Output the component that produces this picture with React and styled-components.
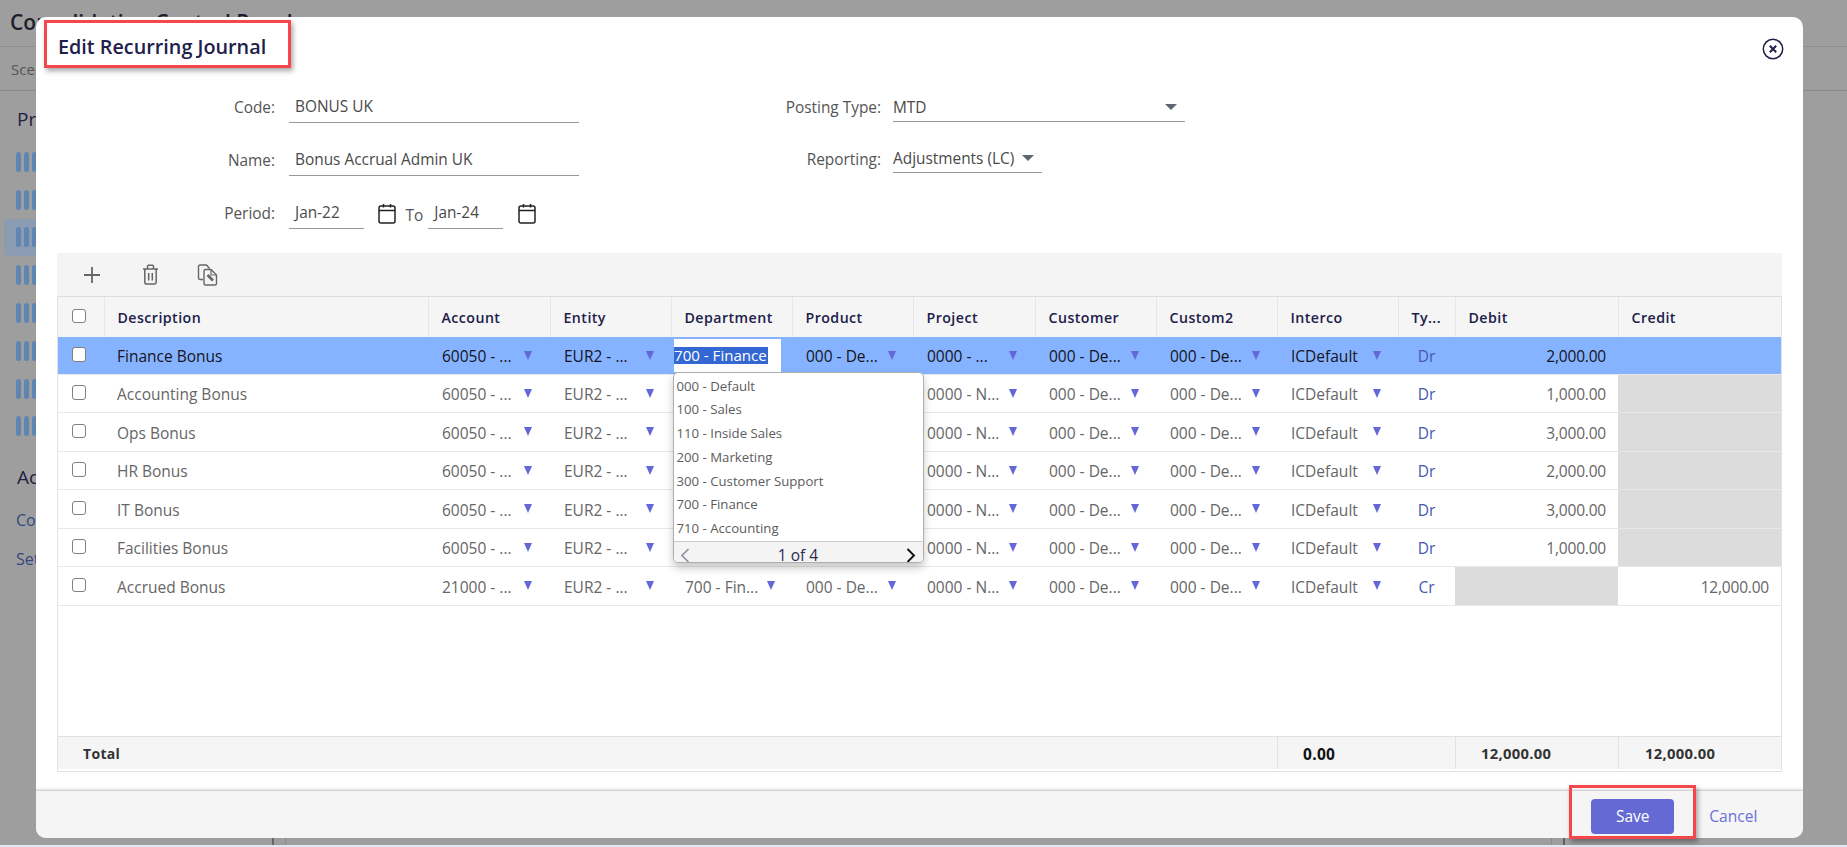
import React from "react";
import styled, { createGlobalStyle } from "styled-components";

const Global = createGlobalStyle`
  html, body { margin: 0; padding: 0; background: #9e9e9e; }
  * { box-sizing: border-box; }
  body { font-family: "Open Sans", "Noto Sans", "Liberation Sans", sans-serif; overflow: hidden; }
`;

const COLS = "46px 324px 122px 121px 121px 121px 122px 121px 121px 121px 57px 163px 163px";

/* ---------- dimmed page behind the dialog ---------- */
const Page = styled.div`
  position: relative; width: 1847px; height: 847px; overflow: hidden;
  display: flex; flex-direction: column; background: #9e9e9e;
`;
const PageHeader = styled.header`
  height: 47px; flex: none; padding: 7px 0 0 10px; border-bottom: 1px solid #8e8e8e;
  font-size: 21px; font-weight: 600; color: #1d1d2b; line-height: 30px;
`;
const ScenarioBar = styled.div`
  height: 44px; flex: none; padding-left: 11px; border-bottom: 1px solid #8a8a8a;
  font-size: 15px; color: #555; line-height: 45px;
`;
const PageBody = styled.div`flex: 1; display: flex; min-height: 0;`;
const Sidebar = styled.aside`
  width: 274px; flex: none; padding: 16px 0 0 4px; border-right: 2px solid #666;
`;
const SideTitle = styled.div`
  font-size: 19px; font-weight: 500; color: #1d2240; padding-left: 13px; line-height: 24px;
  height: ${(p) => p.$h}px; margin-top: ${(p) => p.$top || 0}px;
`;
const SideLink = styled.div`font-size: 16px; color: #2f4a80; padding-left: 12px; height: 39px; line-height: 24px;`;
const ProcessRow = styled.div`
  height: 37.8px; width: 200px; padding-left: 12px; display: flex; align-items: center; gap: 3px; border-radius: 5px;
  background: ${(p) => (p.$active ? "#8b9bb1" : "transparent")};
`;
const Pill = styled.span`width: 5px; height: 20px; border-radius: 3px; background: #5f86b3;`;
const Gutter = styled.div`width: 12px; flex: none; border-right: 1px solid #8a8a8a;`;
const MainPane = styled.main`width: 1266px; flex: none; border-right: 1px solid #8a8a8a;`;
const Rail = styled.div`width: 13px; flex: none; border-right: 2px solid #5f5f5f;`;
const Taskbar = styled.div`height: 2px; flex: none; background: #dfe8f2;`;

/* ---------- dialog ---------- */
const Modal = styled.section`
  position: absolute; left: 36px; top: 17px; width: 1766.5px; height: 821px;
  display: flex; flex-direction: column; background: #fff; border-radius: 10px; overflow: hidden;
`;
const TitleRow = styled.div`
  height: 53px; flex: none; display: flex; align-items: center; justify-content: space-between;
  padding: 5px 19px 0 22px;
`;
const Title = styled.h2`margin: 0; font-size: 19.8px; font-weight: 600; color: #20204a;`;
const CloseBtn = styled.button`
  border: 0; background: none; padding: 0; margin-top: 5px; display: flex; width: 22px; height: 22px; color: #20204a;
`;
const Form = styled.div`height: 183px; flex: none; display: flex;`;
const FormCol = styled.div`width: ${(p) => p.$w}px; flex: none; padding-left: ${(p) => p.$pad || 0}px;`;
const FieldRow = styled.div`
  height: ${(p) => p.$h || 53}px; display: flex; align-items: flex-end;
`;
const Label = styled.label`
  width: ${(p) => p.$w}px; flex: none; margin-right: ${(p) => p.$gap}px; text-align: right;
  margin-bottom: ${(p) => p.$drop || 0}px;
  font-size: 15.4px; line-height: 30px; color: #555;
`;
const TextValue = styled.div`
  width: ${(p) => p.$w}px; height: ${(p) => p.$h || 31}px; flex: none; border-bottom: 1px solid #999;
  padding-left: ${(p) => p.$pad ?? 6}px;
  display: flex; align-items: center; justify-content: space-between;
  font-size: 15.4px; color: #4a4a4a; line-height: 26px;
`;
const DropCaret = styled.span`
  width: 0; height: 0; margin-right: 8px; border-left: 6px solid transparent; border-right: 6px solid transparent;
  border-top: 6px solid #5f6670; margin-top: -2px;
`;
const DateIcon = styled.svg`
  width: 18px; height: 21px; flex: none; margin: 0 ${(p) => p.$r}px 5px ${(p) => p.$l}px; color: #222;
`;
const ToLabel = styled.span`font-size: 15.4px; color: #555; line-height: 26px; margin-right: 5px;`;

/* ---------- grid ---------- */
const Table = styled.div`
  height: 519px; flex: none; margin: 0 20.5px 0 21px; display: flex; flex-direction: column;
  border-right: 1px solid #e4e4e4; border-bottom: 1px solid #e0e0e0; border-left: 1px solid #e4e4e4;
`;
const Toolbar = styled.div`
  height: 43px; flex: none; margin: 0 -1px; background: #f4f4f4; display: flex; align-items: center;
  padding-left: 25px; color: #666;
`;
const ToolBtn = styled.button`
  border: 0; background: none; padding: 0; display: flex; color: #666; margin-right: ${(p) => p.$mr}px;
`;
const HeadRow = styled.div`
  height: 41px; flex: none; display: grid; grid-template-columns: ${COLS};
  background: #f5f5f5; border-top: 1px solid #ddd;
`;
const HeadCell = styled.div`
  display: flex; align-items: center; padding-left: 12.5px; font-size: 14.2px; font-weight: 600;
  letter-spacing: .45px; color: #20204a; border-left: 1px solid #e6e6e6;
`;
const Rows = styled.div`flex: 1; min-height: 0;`;
const Row = styled.div`
  height: ${(p) => (p.$selected ? 37.5 : 38.5)}px; display: grid; grid-template-columns: ${COLS};
  background: ${(p) => (p.$selected ? "#86b3ff" : "#fff")};
  color: ${(p) => (p.$selected ? "#14141c" : "#666")};
  font-weight: ${(p) => (p.$selected ? 500 : 400)};
  border-bottom: 1px solid #e8e8e8;
  font-size: 15.5px;
`;
const Cell = styled.div`
  position: relative; display: flex; align-items: center; padding: 1.5px ${(p) => (p.$right ? "12px" : "0")} 0 ${(p) => p.$left ?? 14}px;
  justify-content: ${(p) => (p.$right ? "flex-end" : "flex-start")};
  background: ${(p) => (p.$off ? "#dcdcdc" : "transparent")};
  letter-spacing: ${(p) => (p.$right ? "-.2px" : "0")};
  white-space: nowrap;
`;
const CheckCell = styled(Cell)`padding: 0 0 2px 13.5px;`;
const Check = styled.input.attrs({ type: "checkbox", readOnly: true, tabIndex: -1 })`
  appearance: none; margin: 0; width: 14.5px; height: 14.5px; background: #fff; border: 1px solid #808080; border-radius: 3px;
`;
const SelectText = styled.span`width: 82px; flex: none; overflow: hidden;`;
const GridCaret = styled.span`
  width: 0; height: 0; flex: none; margin-top: -2px;
  border-left: 4.5px solid transparent; border-right: 4.5px solid transparent; border-top: 9px solid #6467d8;
`;
const TypeCell = styled(Cell)`padding: 1.5px 0 0; justify-content: center; color: #4458b0; font-weight: 400;`;
const Editor = styled.div`
  position: absolute; left: 3px; top: 2px; width: 107px; height: 33px; background: #fff;
  display: flex; align-items: center;
`;
const Highlight = styled.span`
  height: 17px; padding-right: 1px; background: #3367d1; color: #fff; font-size: 15.1px; line-height: 17px; font-weight: 400; white-space: nowrap;
`;
const Dropdown = styled.div`
  position: absolute; left: 1.5px; top: 35px; z-index: 5; width: 251px; height: 191px; background: #fff;
  border: 1px solid #aeaeae; border-radius: 5px; box-shadow: 0 5px 9px rgba(0,0,0,.22);
  display: flex; flex-direction: column; overflow: hidden; color: #5c5c5c; font-weight: 400;
`;
const OptionList = styled.div`flex: none; padding-top: 1.5px;`;
const Option = styled.div`height: 23.8px; line-height: 23.8px; padding-left: 3px; font-size: 13.2px;`;
const Pager = styled.div`
  flex: 1; display: flex; align-items: center; justify-content: space-between; padding: 2px 6px 0;
  background: #f4f4f4; border-top: 1px solid #ccc; color: #2b2b55; font-size: 15.5px;
`;
const Chevron = styled.svg`width: 10px; height: 15px; color: ${(p) => p.$c};`;
const TotalRow = styled.div`
  height: 33px; flex: none; margin-bottom: 2px; display: grid; grid-template-columns: 1219px 178px 163px 163px;
  background: #f5f5f5; border-top: 1px solid #e0e0e0; color: #333; font-size: 14.6px; font-weight: 700; letter-spacing: .3px;
`;
const TotalCell = styled.div`
  display: flex; align-items: center; padding: ${(p) => p.$top || 0}px 0 0 ${(p) => p.$pad}px; font-size: ${(p) => p.$size || 14.8}px;
  border-left: ${(p) => (p.$first ? "0" : "1px solid #e2e2e2")}; color: ${(p) => p.$c || "#333"};
`;

/* ---------- dialog footer ---------- */
const ModalFooter = styled.footer`
  margin-top: auto; height: 48px; flex: none; display: flex; align-items: center; justify-content: flex-end;
  padding: 3px 45px 0 0; gap: 35px; background: #f5f5f5; border-top: 1px solid #d4d4d4;
  box-shadow: 0 -1px 2px rgba(0,0,0,.14);
`;
const SaveBtn = styled.button`
  width: 83px; height: 35px; border: 0; border-radius: 4px; background: #6469d3; color: #fff;
  font: 400 15.5px "Open Sans", sans-serif;
`;
const CancelBtn = styled.button`
  border: 0; background: none; padding: 0; color: #6c6fd8; font: 400 15.6px "Open Sans", sans-serif;
`;
const Callout = styled.div`
  position: absolute; left: ${(p) => p.$x}px; top: ${(p) => p.$y}px; width: ${(p) => p.$w}px; height: ${(p) => p.$h}px;
  border: 3px solid #f4474c; box-shadow: 2px 3px 5px rgba(0,0,0,.35); pointer-events: none;
`;

const data = [
  ["Finance Bonus", "60050 - ...", "EUR2 - ...", "700 - Finance", "000 - De...", "0000 - ...", "000 - De...", "000 - De...", "Dr", "2,000.00", "", false],
  ["Accounting Bonus", "60050 - ...", "EUR2 - ...", "", "", "0000 - N...", "000 - De...", "000 - De...", "Dr", "1,000.00", "", "credit"],
  ["Ops Bonus", "60050 - ...", "EUR2 - ...", "", "", "0000 - N...", "000 - De...", "000 - De...", "Dr", "3,000.00", "", "credit"],
  ["HR Bonus", "60050 - ...", "EUR2 - ...", "", "", "0000 - N...", "000 - De...", "000 - De...", "Dr", "2,000.00", "", "credit"],
  ["IT Bonus", "60050 - ...", "EUR2 - ...", "", "", "0000 - N...", "000 - De...", "000 - De...", "Dr", "3,000.00", "", "credit"],
  ["Facilities Bonus", "60050 - ...", "EUR2 - ...", "", "", "0000 - N...", "000 - De...", "000 - De...", "Dr", "1,000.00", "", "credit"],
  ["Accrued Bonus", "21000 - ...", "EUR2 - ...", "700 - Fin...", "000 - De...", "0000 - N...", "000 - De...", "000 - De...", "Cr", "", "12,000.00", "debit"],
];
const heads = ["Description", "Account", "Entity", "Department", "Product", "Project", "Customer", "Custom2", "Interco", "Ty...", "Debit", "Credit"];
const options = ["000 - Default", "100 - Sales", "110 - Inside Sales", "200 - Marketing", "300 - Customer Support", "700 - Finance", "710 - Accounting"];

const CalendarGlyph = ({ l, r }) => (
  <DateIcon $l={l} $r={r} viewBox="0 0 18 21" fill="none" stroke="currentColor" strokeWidth="1.5">
    <rect x="1" y="3" width="16" height="17" rx="2" />
    <path d="M1 7.5h16M5.5 1v3.5M12.5 1v3.5" />
  </DateIcon>
);
const SelectCell = ({ children }) => (
  <Cell>
    {children ? (
      <>
        <SelectText>{children}</SelectText>
        <GridCaret />
      </>
    ) : null}
  </Cell>
);

export default function App() {
  return (
    <Page>
      <Global />
      <PageHeader>Consolidation Control Panel</PageHeader>
      <ScenarioBar>Scenario</ScenarioBar>
      <PageBody>
        <Sidebar>
          <SideTitle $h={36}>Processes</SideTitle>
          {[0, 1, 2, 3, 4, 5, 6, 7].map((i) => (
            <ProcessRow key={i} $active={i === 2}>
              <Pill /><Pill /><Pill />
            </ProcessRow>
          ))}
          <SideTitle $top={20} $h={43}>Actions</SideTitle>
          <SideLink>Copy</SideLink>
          <SideLink>Settings</SideLink>
        </Sidebar>
        <Gutter />
        <MainPane />
        <Rail />
      </PageBody>
      <Taskbar />

      <Modal>
        <TitleRow>
          <Title>Edit Recurring Journal</Title>
          <CloseBtn aria-label="Close">
            <svg width="22" height="22" viewBox="0 0 22 22" fill="none" stroke="currentColor">
              <circle cx="11" cy="11" r="9.7" strokeWidth="1.5" />
              <path d="M7.8 7.8l6.4 6.4M14.2 7.8l-6.4 6.4" strokeWidth="2" />
            </svg>
          </CloseBtn>
        </TitleRow>
        <Form>
          <FormCol $w={543}>
            <FieldRow>
              <Label $w={239} $gap={14}>Code:</Label>
              <TextValue $w={290}>BONUS UK</TextValue>
            </FieldRow>
            <FieldRow>
              <Label $w={239} $gap={14}>Name:</Label>
              <TextValue $w={290}>Bonus Accrual Admin UK</TextValue>
            </FieldRow>
            <FieldRow>
              <Label $w={239} $gap={14}>Period:</Label>
              <TextValue $w={75}>Jan-22</TextValue>
              <CalendarGlyph l={14} r={9.5} />
              <ToLabel>To</ToLabel>
              <TextValue $w={75}>Jan-24</TextValue>
              <CalendarGlyph l={15} r={0} />
            </FieldRow>
          </FormCol>
          <FormCol $w={620} $pad={102}>
            <FieldRow $h={51.5}>
              <Label $w={200} $gap={12} $drop={-1.5}>Posting Type:</Label>
              <TextValue $w={292} $h={27} $pad={0}>MTD<DropCaret /></TextValue>
            </FieldRow>
            <FieldRow $h={51.5}>
              <Label $w={200} $gap={12} $drop={-1.5}>Reporting:</Label>
              <TextValue $w={149} $h={27} $pad={0}>Adjustments (LC)<DropCaret /></TextValue>
            </FieldRow>
          </FormCol>
        </Form>

        <Table>
          <Toolbar>
            <ToolBtn $mr={40} aria-label="Add">
              <svg width="20" height="20" viewBox="0 0 20 20" fill="none" stroke="currentColor" strokeWidth="1.8">
                <path d="M10 2v16M2 10h16" />
              </svg>
            </ToolBtn>
            <ToolBtn $mr={38} aria-label="Delete">
              <svg width="17" height="21" viewBox="0 0 17 21" fill="none" stroke="currentColor" strokeWidth="1.5">
                <path d="M1 5h15M5.5 5V2.2A1 1 0 0 1 6.5 1.2h4a1 1 0 0 1 1 1V5M2.8 5v13.2a1.8 1.8 0 0 0 1.8 1.8h7.8a1.8 1.8 0 0 0 1.8-1.8V5M6.7 9v7.5M10.3 9v7.5" />
              </svg>
            </ToolBtn>
            <ToolBtn $mr={0} aria-label="Copy">
              <svg width="21" height="22" viewBox="0 0 21 22" fill="none" stroke="currentColor" strokeWidth="1.4">
                <path d="M6 15.5H3A1.5 1.5 0 0 1 1.5 14V2.5A1.5 1.5 0 0 1 3 1h6.5l3 3.5" />
                <path d="M8.5 5.5H14l5.5 5.5v8.5a1.5 1.5 0 0 1-1.5 1.5H8.5A1.5 1.5 0 0 1 7 19.5V7a1.5 1.5 0 0 1 1.5-1.5z" />
                <path d="M10.5 11l5.5 5.5" strokeWidth="2.6" />
                <path d="M14 6v5h5" strokeWidth="1.2" />
              </svg>
            </ToolBtn>
          </Toolbar>
          <HeadRow>
            <CheckCell><Check /></CheckCell>
            {heads.map((h) => <HeadCell key={h}>{h}</HeadCell>)}
          </HeadRow>
          <Rows>
            {data.map((r, i) => (
              <Row key={r[0]} $selected={i === 0}>
                <CheckCell><Check /></CheckCell>
                <Cell $left={13}>{r[0]}</Cell>
                <SelectCell>{r[1]}</SelectCell>
                <SelectCell>{r[2]}</SelectCell>
                {i === 0 ? (
                  <Cell>
                    <Editor><Highlight>{r[3]}</Highlight></Editor>
                    <Dropdown>
                      <OptionList>
                        {options.map((o) => <Option key={o}>{o}</Option>)}
                      </OptionList>
                      <Pager>
                        <Chevron $c="#8a93a0" viewBox="0 0 10 15" fill="none" stroke="currentColor" strokeWidth="1.7">
                          <path d="M8.5 1L2 7.5 8.5 14" />
                        </Chevron>
                        <span>1 of 4</span>
                        <Chevron $c="#111" viewBox="0 0 10 15" fill="none" stroke="currentColor" strokeWidth="1.9">
                          <path d="M1.5 1L8 7.5 1.5 14" />
                        </Chevron>
                      </Pager>
                    </Dropdown>
                  </Cell>
                ) : (
                  <SelectCell>{r[3]}</SelectCell>
                )}
                <SelectCell>{r[4]}</SelectCell>
                <SelectCell>{r[5]}</SelectCell>
                <SelectCell>{r[6]}</SelectCell>
                <SelectCell>{r[7]}</SelectCell>
                <SelectCell>ICDefault</SelectCell>
                <TypeCell>{r[8]}</TypeCell>
                <Cell $right $off={r[11] === "debit"}>{r[9]}</Cell>
                <Cell $right $off={r[11] === "credit"}>{r[10]}</Cell>
              </Row>
            ))}
          </Rows>
          <TotalRow>
            <TotalCell $first $pad={25} $size={14}>Total</TotalCell>
            <TotalCell $pad={25} $c="#111" $size={15.5} $top={2}>0.00</TotalCell>
            <TotalCell $pad={25}>12,000.00</TotalCell>
            <TotalCell $pad={26}>12,000.00</TotalCell>
          </TotalRow>
        </Table>
        <ModalFooter>
          <SaveBtn>Save</SaveBtn>
          <CancelBtn>Cancel</CancelBtn>
        </ModalFooter>
      </Modal>

      <Callout $x={44} $y={20} $w={247} $h={48} />
      <Callout $x={1569} $y={785} $w={127} $h={54} />
    </Page>
  );
}
